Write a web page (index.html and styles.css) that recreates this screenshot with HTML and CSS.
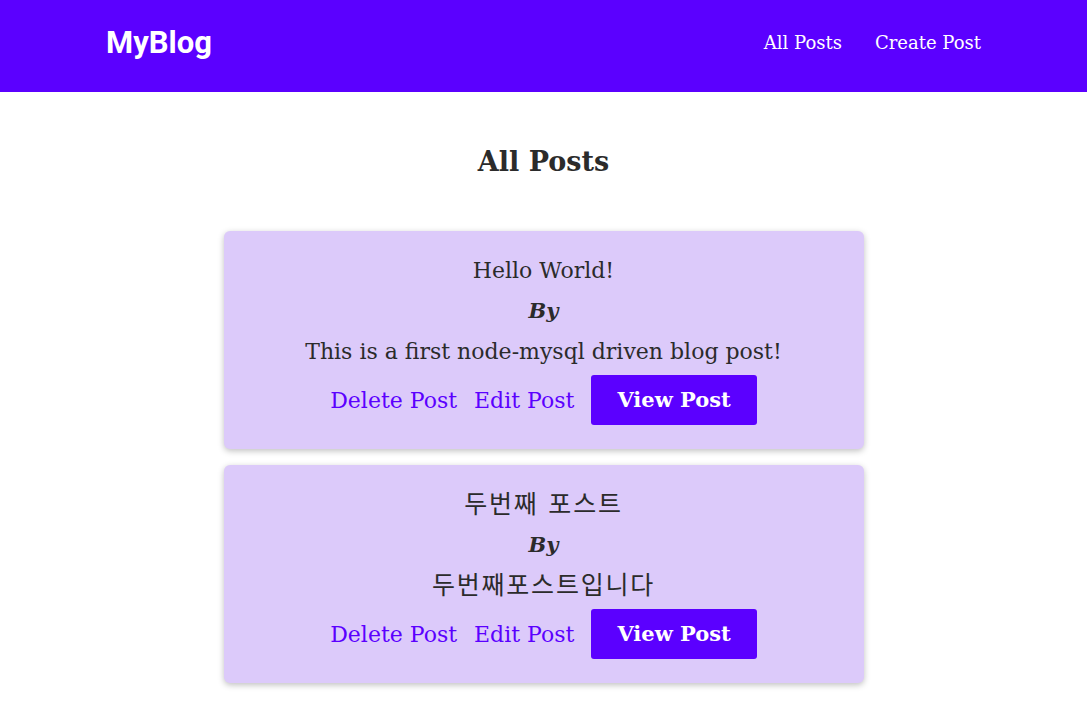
FILE: index.html
```html
<!DOCTYPE html>
<html lang="ko">
<head>
  <meta charset="UTF-8">
  <meta name="viewport" content="width=device-width, initial-scale=1.0">
  <title>MyBlog</title>
  <link rel="stylesheet" href="styles.css">
</head>
<body>
  <header class="navbar">
    <div class="nav-inner">
      <a class="logo" href="#">MyBlog</a>
      <nav class="nav-links">
        <a href="#">All Posts</a>
        <a href="#">Create Post</a>
      </nav>
    </div>
  </header>

  <main class="container">
    <h1>All Posts</h1>

    <div class="post">
      <h3 class="post-title">Hello World!</h3>
      <p class="post-author"><em>By</em></p>
      <p class="post-body">This is a first node-mysql driven blog post!</p>
      <div class="actions">
        <a class="link" href="#">Delete Post</a>
        <a class="link" href="#">Edit Post</a>
        <a class="btn" href="#">View Post</a>
      </div>
    </div>

    <div class="post">
      <h3 class="post-title ko">두번째 포스트</h3>
      <p class="post-author"><em>By</em></p>
      <p class="post-body ko">두번째포스트입니다</p>
      <div class="actions">
        <a class="link" href="#">Delete Post</a>
        <a class="link" href="#">Edit Post</a>
        <a class="btn" href="#">View Post</a>
      </div>
    </div>
  </main>
</body>
</html>
```

FILE: styles.css
```css
body {
  margin: 0;
  padding: 0;
  font-family: "Roboto Slab", "DejaVu Serif", "Noto Sans CJK KR", serif;
  color: #2b2b2b;
  background: #fff;
}

a {
  text-decoration: none;
}

.navbar {
  background: #5b00ff;
  height: 92px;
  box-sizing: border-box;
  padding-bottom: 8px;
}

.nav-inner {
  max-width: 875px;
  margin: 0 auto;
  height: 100%;
  display: flex;
  align-items: center;
  justify-content: space-between;
}

.logo {
  font-family: Roboto, "Liberation Sans", sans-serif;
  font-weight: 700;
  font-size: 31px;
  color: #fff;
}

.nav-links {
  display: flex;
  gap: 33px;
}

.nav-links a {
  color: #fff;
  font-size: 18px;
}

.container {
  width: 640px;
  margin: 0 auto;
  padding-top: 50px;
}

h1 {
  text-align: center;
  font-size: 27px;
  font-weight: 700;
  line-height: 40px;
  margin: 0 0 49px;
}

.post {
  background: #dccafa;
  border-radius: 6px;
  box-shadow: 0 2px 6px rgba(0, 0, 0, 0.25);
  padding: 25px 16px 24px;
  margin-bottom: 16px;
  text-align: center;
}

.post-title {
  font-size: 22px;
  font-weight: 400;
  margin: 0;
  line-height: 30px;
}

.post-author {
  font-size: 21px;
  font-weight: 700;
  margin: 10px 0 0;
  line-height: 30px;
}

.post-body {
  font-size: 22px;
  margin: 11px 0 0;
  line-height: 30px;
}

.ko {
  font-size: 25px;
  font-weight: 400;
  letter-spacing: 1.8px;
}

.actions {
  display: flex;
  justify-content: center;
  align-items: center;
  gap: 17px;
  margin-top: 8px;
}

.link {
  color: #5b00ff;
  font-size: 22px;
}

.btn {
  background: #5b00ff;
  color: #fff;
  font-size: 21px;
  font-weight: 700;
  border-radius: 3px;
  padding: 0 26px;
  line-height: 50px;
}
```
